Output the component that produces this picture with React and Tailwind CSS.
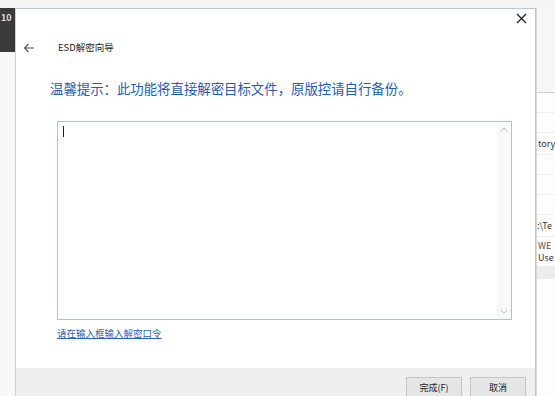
import React from "react";

const font = { fontFamily: '"Noto Sans CJK SC", "Liberation Sans", sans-serif' };

function RightStrip() {
  return (
    <div className="flex w-[19px] flex-col overflow-hidden border-l border-[#d8d8d8] bg-[#fdfdfd] text-[9px] leading-none text-[#333]">
      <div className="h-[85px] border-b border-[#cfcfcf] bg-[#f6f6f6]" />
      <div className="h-[20px] border-b border-[#eeeeee]" />
      <div className="h-[20px] border-b border-[#eeeeee]" />
      <div className="flex h-[22px] items-center border-b border-[#eeeeee] pl-[1px]">tory</div>
      <div className="h-[20px] border-b border-[#eeeeee]" />
      <div className="h-[20px] border-b border-[#eeeeee]" />
      <div className="h-[20px] border-b border-[#eeeeee]" />
      <div className="flex h-[22px] items-center border-b border-[#eeeeee]">:\Te</div>
      <div className="flex h-[30px] flex-col justify-center gap-[3px] border-b border-[#eeeeee] pl-[1px]">
        <span className="text-[#555]">WE</span>
        <span>Use</span>
      </div>
      <div className="h-[12px] bg-[#ececec]" />
      <div className="flex-1" />
    </div>
  );
}

export default function App() {
  return (
    <div className="flex h-[396px] w-[555px] flex-col overflow-hidden bg-[#f3f3f3]" style={font}>
      <div className="h-[8px] shrink-0 bg-[#f4f4f4]" />
      <div className="flex flex-1">
        <div className="flex w-[16px] flex-col border-r border-[#c9d0e0]">
          <div className="flex h-[44px] items-start bg-[#3a3a3a] pl-[1px] pt-[5px] text-[9px] leading-none font-bold text-[#ddd]">
            10
          </div>
          <div className="flex-1 bg-[#f7f7f7]" />
        </div>

        <div className="flex w-[520px] flex-col border-t border-r border-[#b9c6dc] bg-white">
          <div className="flex h-[18px] justify-end pr-[8px] pt-[3px]">
            <svg width="11" height="11" viewBox="0 0 11 11" className="mt-[1px]">
              <path d="M1 1 L10 10 M10 1 L1 10" stroke="#222" strokeWidth="1.3" />
            </svg>
          </div>
          <div className="mt-[16px] flex items-center">
            <svg width="12" height="10" viewBox="0 0 12 10" className="ml-[7px]">
              <path d="M11 5 H1.5 M5.5 1 L1.5 5 L5.5 9" stroke="#555" strokeWidth="1.1" fill="none" />
            </svg>
            <span className="ml-[23px] text-[9.5px] leading-none text-[#222]">ESD解密向导</span>
          </div>
          <div className="mt-[29px] pl-[34px] text-[13.4px] leading-none text-[#1f5cb3]">
            温馨提示：此功能将直接解密目标文件，原版控请自行备份。
          </div>
          <div className="ml-[41px] mt-[26px] flex h-[199px] w-[455px] border border-[#a4c4e6] bg-white">
            <div className="flex-1 pl-[5px] pt-[4px]">
              <div className="h-[11px] w-[1px] bg-[#222]" />
            </div>
            <div className="flex w-[14px] flex-col items-center justify-between bg-[#fafafa] py-[5px]">
              <svg width="8" height="5" viewBox="0 0 8 5">
                <path d="M1 4 L4 1 L7 4" stroke="#bbb" fill="none" />
              </svg>
              <div className="flex-1" />
              <svg width="8" height="5" viewBox="0 0 8 5">
                <path d="M1 1 L4 4 L7 1" stroke="#bbb" fill="none" />
              </svg>
            </div>
          </div>
          <div className="ml-[41px] mt-[9px] text-[9.5px] leading-none text-[#2a62b8] underline">
            请在输入框输入解密口令
          </div>
          <div className="flex-1" />
          <div className="flex h-[28px] items-end justify-end gap-[8px] bg-[#efefef] pr-[9px]">
            <button className="h-[19px] w-[56px] border border-[#c5c5c5] border-b-0 bg-[#e6e6e6] text-[9px] leading-none text-[#222]">
              完成(F)
            </button>
            <button className="h-[19px] w-[56px] border border-[#c5c5c5] border-b-0 bg-[#e6e6e6] text-[9px] leading-none text-[#222]">
              取消
            </button>
          </div>
        </div>

        <RightStrip />
      </div>
    </div>
  );
}
